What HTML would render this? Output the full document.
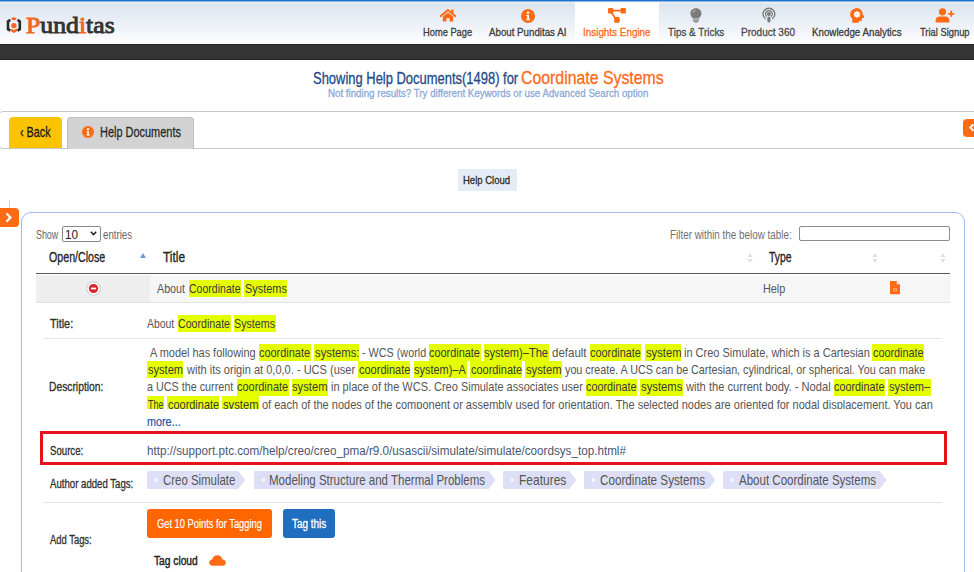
<!DOCTYPE html>
<html><head><meta charset="utf-8"><title>Punditas</title>
<style>
html,body{margin:0;padding:0;width:974px;height:572px;overflow:hidden;background:#fff;}
body{position:relative;font-family:'Liberation Sans',sans-serif;}
div,span{box-sizing:border-box;}
svg{position:absolute;overflow:visible;}
</style></head><body>
<div style="position:absolute;left:0px;top:0px;width:974px;height:44px;background:linear-gradient(to bottom,#1b72d0 0,#1b72d0 1px,#8fb4e0 1px,#8fb4e0 2px,#eceff3 2px,#e9edf2 3px,#dce5ef 4px,#f4f7fb 34px,#fdfeff 43px)"></div>
<div style="position:absolute;left:0px;top:44px;width:974px;height:16px;background:#343434;border-top:1px solid #222;border-bottom:1px solid #252525"></div>
<div style="position:absolute;left:575px;top:2px;width:84px;height:42px;background:#fff"></div>
<svg style="left:6px;top:17px" width="16" height="16" viewBox="0 0 16 16">
<path d="M4.3 2.9 L2 4.4 L2 12.2 L4.3 13.7" fill="none" stroke="#2b2b2b" stroke-width="2.6"/>
<path d="M11.5 2.9 L13.8 4.4 L13.8 12.2 L11.5 13.7" fill="none" stroke="#2b2b2b" stroke-width="2.6"/>
<path d="M7.9 0.3 L10.4 1.1 L10.4 2.5 L7.9 3.3 L5.4 2.5 L5.4 1.1Z" fill="#f26522"/>
<circle cx="7.9" cy="8.6" r="2.7" fill="#f26522"/>
<path d="M4.8 11.4 L7.9 13.1 L10.9 11.4 L10.9 14.3 L7.9 16 L4.8 14.3Z" fill="#f26522"/>
</svg>
<div style="position:absolute;left:26.10px;top:13px;font:normal 24px/24px 'Liberation Serif', serif;color:#333;white-space:pre;transform-origin:0 20px;transform:scale(1.0725,1.0000);-webkit-text-stroke:0.9px currentColor;"><span style="color:#f26522">P</span>und<span style="color:#f26522">i</span>tas</div>
<div style="position:absolute;left:423.27px;top:27px;font:normal 11.5px/11.5px 'Liberation Sans', sans-serif;color:#3a3a3a;white-space:pre;transform-origin:0 9px;transform:scale(0.8086,1.0000);-webkit-text-stroke:0.3px currentColor;">Home Page</div>
<div style="position:absolute;left:489.00px;top:27px;font:normal 11.5px/11.5px 'Liberation Sans', sans-serif;color:#3a3a3a;white-space:pre;transform-origin:0 9px;transform:scale(0.8459,1.0000);-webkit-text-stroke:0.3px currentColor;">About Punditas AI</div>
<div style="position:absolute;left:582.83px;top:27px;font:normal 11.5px/11.5px 'Liberation Sans', sans-serif;color:#ff6a1f;white-space:pre;transform-origin:0 9px;transform:scale(0.8593,1.0000);-webkit-text-stroke:0.3px currentColor;">Insights Engine</div>
<div style="position:absolute;left:667.85px;top:27px;font:normal 11.5px/11.5px 'Liberation Sans', sans-serif;color:#4a4a4a;white-space:pre;transform-origin:0 9px;transform:scale(0.8608,1.0000);-webkit-text-stroke:0.3px currentColor;">Tips &amp; Tricks</div>
<div style="position:absolute;left:741.22px;top:27px;font:normal 11.5px/11.5px 'Liberation Sans', sans-serif;color:#4a4a4a;white-space:pre;transform-origin:0 9px;transform:scale(0.8713,1.0000);-webkit-text-stroke:0.3px currentColor;">Product 360</div>
<div style="position:absolute;left:812.24px;top:27px;font:normal 11.5px/11.5px 'Liberation Sans', sans-serif;color:#3a3a3a;white-space:pre;transform-origin:0 9px;transform:scale(0.8488,1.0000);-webkit-text-stroke:0.3px currentColor;">Knowledge Analytics</div>
<div style="position:absolute;left:919.85px;top:27px;font:normal 11.5px/11.5px 'Liberation Sans', sans-serif;color:#3a3a3a;white-space:pre;transform-origin:0 9px;transform:scale(0.8127,1.0000);-webkit-text-stroke:0.3px currentColor;">Trial Signup</div>
<svg style="left:440px;top:9px" width="16" height="13" viewBox="0 0 16 13">
<path d="M0.8 7 L8 1 L15.2 7" fill="none" stroke="#ff6a13" stroke-width="2" stroke-linecap="round" stroke-linejoin="round"/>
<rect x="11.3" y="0.6" width="2.2" height="4" fill="#ff6a13"/>
<path d="M2.8 7.6 L8 3.4 L13.2 7.6 L13.2 12.6 L9.6 12.6 L9.6 9.3 L6.4 9.3 L6.4 12.6 L2.8 12.6Z" fill="#ff6a13"/>
</svg>
<svg style="left:521px;top:8.5px" width="14" height="14" viewBox="0 0 14 14">
<circle cx="7" cy="7" r="7" fill="#ff6a13"/>
<circle cx="7" cy="3.7" r="1.3" fill="#fff"/>
<path d="M5.4 5.9 L8 5.9 L8 9.9 L9 9.9 L9 11.2 L5.2 11.2 L5.2 9.9 L6.2 9.9 L6.2 7.1 L5.4 7.1Z" fill="#fff"/>
</svg>
<svg style="left:608px;top:8px" width="18" height="15" viewBox="0 0 18 15">
<rect x="0" y="0.1" width="5.2" height="5.5" rx="1" fill="#ff6a13"/>
<rect x="12.5" y="0.1" width="5.4" height="5.5" rx="1" fill="#ff6a13"/>
<rect x="6.2" y="9.1" width="5.5" height="5.6" rx="1" fill="#ff6a13"/>
<path d="M4 2.6 L13 2.6 M3.4 4 L6.9 10" stroke="#ff6a13" stroke-width="1.7"/>
</svg>
<svg style="left:690px;top:7.8px" width="12" height="15" viewBox="0 0 12 15">
<path d="M5.9 0.2 C2.6 0.2 0.4 2.6 0.4 5.5 C0.4 7.8 1.9 8.9 2.6 10.5 L9.2 10.5 C9.9 8.9 11.4 7.8 11.4 5.5 C11.4 2.6 9.2 0.2 5.9 0.2Z" fill="#7b7b7b"/>
<rect x="2.8" y="11.4" width="6.2" height="1.3" fill="#7b7b7b"/>
<path d="M3.2 13.3 L8.6 13.3 L7.5 14.6 L4.3 14.6Z" fill="#7b7b7b"/>
<path d="M2.9 5.2 C2.9 3.5 4.2 2.4 5.7 2.4" stroke="#a5a5a5" stroke-width="1.1" fill="none"/>
</svg>
<svg style="left:761.5px;top:8px" width="14" height="15" viewBox="0 0 14 15">
<path d="M3.52 10.93 A5.9 5.9 0 1 1 10.28 10.93" fill="none" stroke="#7b7b7b" stroke-width="1.4"/>
<path d="M4.71 8.7 A3.4 3.4 0 1 1 9.09 8.7" fill="none" stroke="#7b7b7b" stroke-width="1.3"/>
<circle cx="6.9" cy="6.1" r="2" fill="#7b7b7b"/>
<rect x="5.35" y="8.6" width="3.1" height="6" rx="1.5" fill="#7b7b7b"/>
</svg>
<svg style="left:850px;top:7.8px" width="15" height="15" viewBox="0 0 15 15">
<path d="M7.2 0.3 C3.2 0.3 0.2 3 0.2 6.6 C0.2 8.6 1.2 9.9 2.3 10.9 L2.3 14.8 L8.8 14.8 L8.8 12.9 L10.5 12.9 C11.4 12.9 11.9 12.2 11.9 11.4 L11.9 9.9 L13.5 9.9 C14.2 9.9 14.4 9.3 14.1 8.8 L12.7 6.3 C12.5 2.9 10.4 0.3 7.2 0.3Z" fill="#ff6a13"/>
<polygon points="7.00,2.70 7.99,4.00 9.62,3.78 9.40,5.41 10.70,6.40 9.40,7.39 9.62,9.02 7.99,8.80 7.00,10.10 6.01,8.80 4.38,9.02 4.60,7.39 3.30,6.40 4.60,5.41 4.38,3.78 6.01,4.00" fill="#fff"/>
<circle cx="7.0" cy="6.4" r="0.8" fill="#ffc9a8"/>
</svg>
<svg style="left:935px;top:8px" width="20" height="15" viewBox="0 0 20 15">
<circle cx="7.5" cy="3.8" r="3.6" fill="#ff6a13"/>
<path d="M0.6 14.6 L0.6 12.6 C0.6 10 2.4 8.6 4.6 8.6 L10.4 8.6 C12.6 8.6 14.4 10 14.4 12.6 L14.4 14.6Z" fill="#ff6a13"/>
<path d="M16.2 2.8 L16.2 8.8 M13.2 5.8 L19.2 5.8" stroke="#ff6a13" stroke-width="1.8"/>
</svg>
<div style="position:absolute;left:312.90px;top:71px;font:normal 16px/16px 'Liberation Sans', sans-serif;color:#1f4a88;white-space:pre;transform-origin:0 13px;transform:scale(0.8095,1.0000);-webkit-text-stroke:0.3px currentColor;">Showing Help Documents(1498) for</div>
<div style="position:absolute;left:521.26px;top:68px;font:normal 19px/19px 'Liberation Sans', sans-serif;color:#ff6a1a;white-space:pre;transform-origin:0 16px;transform:scale(0.8338,1.0000);-webkit-text-stroke:0.3px currentColor;">Coordinate Systems</div>
<div style="position:absolute;left:328.24px;top:88px;font:normal 11.5px/11.5px 'Liberation Sans', sans-serif;color:#8aa8d8;white-space:pre;transform-origin:0 9px;transform:scale(0.8457,1.0000);-webkit-text-stroke:0.3px currentColor;">Not finding results? Try different Keywords or use Advanced Search option</div>
<div style="position:absolute;left:-2px;top:111px;width:990px;height:38px;border:1px solid #c9c9c9;border-top-width:1.5px;border-radius:5px"></div>
<div style="position:absolute;left:9px;top:117px;width:53px;height:31px;background:#fcc400;border-radius:4px 4px 0 0"></div>
<div style="position:absolute;left:20.16px;top:125px;font:normal 14.5px/14.5px 'Liberation Sans', sans-serif;color:#1a1a1a;white-space:pre;transform-origin:0 12px;transform:scale(0.7463,1.0000);-webkit-text-stroke:0.3px currentColor;">‹ Back</div>
<div style="position:absolute;left:67px;top:117px;width:127px;height:31.5px;background:#d3d3d3;border:1px solid #bcbcbc;border-bottom:none;border-radius:4px 4px 0 0"></div>
<svg style="left:81.8px;top:126.3px" width="12" height="12" viewBox="0 0 14 14">
<circle cx="7" cy="7" r="7" fill="#ff6a13"/>
<circle cx="7" cy="3.7" r="1.3" fill="#fff"/>
<path d="M5.4 5.9 L8 5.9 L8 9.9 L9 9.9 L9 11.2 L5.2 11.2 L5.2 9.9 L6.2 9.9 L6.2 7.1 L5.4 7.1Z" fill="#fff"/>
</svg>
<div style="position:absolute;left:99.75px;top:125px;font:normal 14.5px/14.5px 'Liberation Sans', sans-serif;color:#2a2a2a;white-space:pre;transform-origin:0 12px;transform:scale(0.7547,1.0000);-webkit-text-stroke:0.3px currentColor;">Help Documents</div>
<div style="position:absolute;left:962.6px;top:118.8px;width:16px;height:17.8px;background:#ff6a13;border-radius:4px"></div>
<svg style="left:966px;top:122px" width="8" height="11" viewBox="0 0 8 11">
<path d="M7.3 2.4 L4.3 5.6 L7.3 8.8" fill="none" stroke="#fff" stroke-width="2"/>
</svg>
<div style="position:absolute;left:457.7px;top:168.9px;width:59.6px;height:21.8px;background:#e6ecf5"></div>
<div style="position:absolute;left:463.46px;top:175px;font:normal 11.5px/11.5px 'Liberation Sans', sans-serif;color:#2a2a2a;white-space:pre;transform-origin:0 9px;transform:scale(0.8275,1.0000);-webkit-text-stroke:0.3px currentColor;">Help Cloud</div>
<div style="position:absolute;left:9px;top:200px;width:1px;height:8px;background:#cfcfcf"></div>
<div style="position:absolute;left:-5px;top:207.6px;width:24px;height:19px;background:#ff6a13;border-radius:4px"></div>
<svg style="left:5px;top:212px" width="8" height="11" viewBox="0 0 8 11">
<path d="M1.5 1.3 L5.4 5.5 L1.5 9.7" fill="none" stroke="#fff" stroke-width="2.2"/>
</svg>
<div style="position:absolute;left:20.8px;top:211.5px;width:944.4px;height:420px;border:1.4px solid #a0bcf3;border-radius:10px"></div>
<div style="position:absolute;left:35.72px;top:229px;font:normal 12px/12px 'Liberation Sans', sans-serif;color:#666;white-space:pre;transform-origin:0 10px;transform:scale(0.7385,1.0000);">Show</div>
<div style="position:absolute;left:61.5px;top:226.3px;width:39px;height:15.3px;border:1px solid #888;border-radius:2px;background:#fff"></div>
<div style="position:absolute;left:65.27px;top:229px;font:normal 12px/12px 'Liberation Sans', sans-serif;color:#222;white-space:pre;transform-origin:0 10px;transform:scale(0.9757,1.0000);">10</div>
<svg style="left:90px;top:230.5px" width="7" height="5" viewBox="0 0 7 5">
<path d="M0.8 0.8 L3.5 3.6 L6.2 0.8" fill="none" stroke="#222" stroke-width="1.5"/>
</svg>
<div style="position:absolute;left:102.70px;top:229px;font:normal 12px/12px 'Liberation Sans', sans-serif;color:#666;white-space:pre;transform-origin:0 10px;transform:scale(0.8081,1.0000);">entries</div>
<div style="position:absolute;left:669.83px;top:229px;font:normal 12px/12px 'Liberation Sans', sans-serif;color:#707070;white-space:pre;transform-origin:0 10px;transform:scale(0.8216,1.0000);">Filter within the below table:</div>
<div style="position:absolute;left:799px;top:226.3px;width:150.5px;height:15.2px;border:1px solid #8c8c8c;border-radius:2px;background:#fff"></div>
<div style="position:absolute;left:48.80px;top:250px;font:normal 14px/14px 'Liberation Sans', sans-serif;color:#222;white-space:pre;transform-origin:0 12px;transform:scale(0.7606,1.0000);-webkit-text-stroke:0.3px currentColor;">Open/Close</div>
<div style="position:absolute;left:162.71px;top:250px;font:normal 14px/14px 'Liberation Sans', sans-serif;color:#222;white-space:pre;transform-origin:0 12px;transform:scale(0.8511,1.0000);-webkit-text-stroke:0.3px currentColor;">Title</div>
<div style="position:absolute;left:769.44px;top:250px;font:normal 14px/14px 'Liberation Sans', sans-serif;color:#222;white-space:pre;transform-origin:0 12px;transform:scale(0.7407,1.0000);-webkit-text-stroke:0.3px currentColor;">Type</div>
<svg style="left:140px;top:253px" width="6" height="5" viewBox="0 0 6 5"><path d="M3 0 L6 5 L0 5Z" fill="#6c9ad8"/></svg>
<svg style="left:747px;top:253px" width="6" height="10" viewBox="0 0 6 10"><path d="M3 0 L5.6 4 L0.4 4Z M3 10 L5.6 6 L0.4 6Z" fill="#e0e0e0"/></svg>
<svg style="left:872.4px;top:253px" width="6" height="10" viewBox="0 0 6 10"><path d="M3 0 L5.6 4 L0.4 4Z M3 10 L5.6 6 L0.4 6Z" fill="#e0e0e0"/></svg>
<svg style="left:939.6px;top:253px" width="6" height="10" viewBox="0 0 6 10"><path d="M3 0 L5.6 4 L0.4 4Z M3 10 L5.6 6 L0.4 6Z" fill="#e0e0e0"/></svg>
<div style="position:absolute;left:35.5px;top:272.9px;width:914.3px;height:1.6px;background:#585858"></div>
<div style="position:absolute;left:35.5px;top:274.5px;width:914.3px;height:28.5px;background:#f6f6f6;border-bottom:1px solid #e2e2e2"></div>
<div style="position:absolute;left:35.5px;top:274.5px;width:114px;height:27.5px;background:#eeeeee"></div>
<svg style="left:85.7px;top:280.7px" width="15" height="15" viewBox="0 0 15 15">
<circle cx="7.5" cy="7.5" r="6.8" fill="#fff" stroke="#c8c8c8" stroke-width="1"/>
<circle cx="7.5" cy="7.5" r="4.6" fill="#d8232a"/>
<rect x="4.9" y="6.6" width="5.2" height="1.8" fill="#fff"/>
</svg>
<div style="position:absolute;left:157.40px;top:282px;font:normal 13.5px/13.5px 'Liberation Sans', sans-serif;color:#555555;white-space:pre;transform-origin:0 11px;transform:scale(0.7926,1.0000);">About</div>
<div style="position:absolute;left:188.6px;top:280.3px;width:52.400000000000006px;height:16.9px;background:#e4ff00"></div>
<div style="position:absolute;left:189.01px;top:282px;font:normal 13.5px/13.5px 'Liberation Sans', sans-serif;color:#3a3a3a;white-space:pre;transform-origin:0 11px;transform:scale(0.7801,1.0000);">Coordinate</div>
<div style="position:absolute;left:244px;top:280.3px;width:43px;height:16.9px;background:#e4ff00"></div>
<div style="position:absolute;left:244.56px;top:282px;font:normal 13.5px/13.5px 'Liberation Sans', sans-serif;color:#3a3a3a;white-space:pre;transform-origin:0 11px;transform:scale(0.8092,1.0000);">Systems</div>
<div style="position:absolute;left:763.15px;top:282px;font:normal 13.5px/13.5px 'Liberation Sans', sans-serif;color:#555555;white-space:pre;transform-origin:0 11px;transform:scale(0.8027,1.0000);">Help</div>
<svg style="left:889.6px;top:281px" width="10" height="13.3" viewBox="0 0 10 13.3">
<path d="M0.8 0 L6.6 0 L10 3.4 L10 12.5 Q10 13.3 9.2 13.3 L0.8 13.3 Q0 13.3 0 12.5 L0 0.8 Q0 0 0.8 0Z" fill="#ff6a13"/>
<path d="M6.7 0 L6.7 3.3 L10 3.3Z" fill="#fde3d3"/>
<rect x="3" y="7.3" width="4" height="3.2" fill="#ffb48a"/>
<rect x="3.6" y="7.9" width="1.1" height="0.9" fill="#ff6a13"/><rect x="5.3" y="7.9" width="1.1" height="0.9" fill="#ff6a13"/>
<rect x="3.6" y="9.2" width="1.1" height="0.8" fill="#ff6a13"/><rect x="5.3" y="9.2" width="1.1" height="0.8" fill="#ff6a13"/>
</svg>
<div style="position:absolute;left:49.83px;top:318px;font:normal 12.5px/12.5px 'Liberation Sans', sans-serif;color:#2e2e2e;white-space:pre;transform-origin:0 10px;transform:scale(0.8696,1.0000);-webkit-text-stroke:0.3px currentColor;">Title:</div>
<div style="position:absolute;left:147.30px;top:317px;font:normal 13px/13px 'Liberation Sans', sans-serif;color:#555555;white-space:pre;transform-origin:0 11px;transform:scale(0.8025,1.0000);">About</div>
<div style="position:absolute;left:177.8px;top:315.3px;width:52.89999999999998px;height:16.9px;background:#e4ff00"></div>
<div style="position:absolute;left:178.20px;top:317px;font:normal 13px/13px 'Liberation Sans', sans-serif;color:#3a3a3a;white-space:pre;transform-origin:0 11px;transform:scale(0.8181,1.0000);">Coordinate</div>
<div style="position:absolute;left:233.8px;top:315.3px;width:42.19999999999999px;height:16.9px;background:#e4ff00"></div>
<div style="position:absolute;left:234.37px;top:317px;font:normal 13px/13px 'Liberation Sans', sans-serif;color:#3a3a3a;white-space:pre;transform-origin:0 11px;transform:scale(0.8240,1.0000);">Systems</div>
<div style="position:absolute;left:42.8px;top:337.8px;width:899.2px;height:1px;background:#e3e3e3"></div>
<div style="position:absolute;left:49.20px;top:381px;font:normal 12.5px/12.5px 'Liberation Sans', sans-serif;color:#2e2e2e;white-space:pre;transform-origin:0 10px;transform:scale(0.8233,1.0000);-webkit-text-stroke:0.3px currentColor;">Description:</div>
<div style="position:absolute;left:0;top:340px;width:974px;height:69px;overflow:hidden">
<div style="position:absolute;left:0;top:-340px;width:974px;height:572px">
<div style="position:absolute;left:150.00px;top:346px;font:normal 13px/13px 'Liberation Sans', sans-serif;color:#555555;white-space:pre;transform-origin:0 11px;transform:scale(0.8399,1.0000);">A model has following</div>
<div style="position:absolute;left:258.8px;top:344.2px;width:52.0px;height:16.9px;background:#e4ff00"></div>
<div style="position:absolute;left:259.36px;top:346px;font:normal 13px/13px 'Liberation Sans', sans-serif;color:#3a3a3a;white-space:pre;transform-origin:0 11px;transform:scale(0.8398,1.0000);">coordinate</div>
<div style="position:absolute;left:314px;top:344.2px;width:45px;height:16.9px;background:#e4ff00"></div>
<div style="position:absolute;left:314.72px;top:346px;font:normal 13px/13px 'Liberation Sans', sans-serif;color:#3a3a3a;white-space:pre;transform-origin:0 11px;transform:scale(0.8656,1.0000);">systems:</div>
<div style="position:absolute;left:362.06px;top:346px;font:normal 13px/13px 'Liberation Sans', sans-serif;color:#555555;white-space:pre;transform-origin:0 11px;transform:scale(0.8300,1.0000);">- WCS (world</div>
<div style="position:absolute;left:428.8px;top:344.2px;width:51.89999999999998px;height:16.9px;background:#e4ff00"></div>
<div style="position:absolute;left:429.36px;top:346px;font:normal 13px/13px 'Liberation Sans', sans-serif;color:#3a3a3a;white-space:pre;transform-origin:0 11px;transform:scale(0.8381,1.0000);">coordinate</div>
<div style="position:absolute;left:483.7px;top:344.2px;width:65.19999999999999px;height:16.9px;background:#e4ff00"></div>
<div style="position:absolute;left:484.43px;top:346px;font:normal 13px/13px 'Liberation Sans', sans-serif;color:#3a3a3a;white-space:pre;transform-origin:0 11px;transform:scale(0.8521,1.0000);">system)–The</div>
<div style="position:absolute;left:551.84px;top:346px;font:normal 13px/13px 'Liberation Sans', sans-serif;color:#555555;white-space:pre;transform-origin:0 11px;transform:scale(0.8844,1.0000);">default</div>
<div style="position:absolute;left:589.6px;top:344.2px;width:51.89999999999998px;height:16.9px;background:#e4ff00"></div>
<div style="position:absolute;left:590.16px;top:346px;font:normal 13px/13px 'Liberation Sans', sans-serif;color:#3a3a3a;white-space:pre;transform-origin:0 11px;transform:scale(0.8381,1.0000);">coordinate</div>
<div style="position:absolute;left:644.8px;top:344.2px;width:36.60000000000002px;height:16.9px;background:#e4ff00"></div>
<div style="position:absolute;left:645.52px;top:346px;font:normal 13px/13px 'Liberation Sans', sans-serif;color:#3a3a3a;white-space:pre;transform-origin:0 11px;transform:scale(0.8636,1.0000);">system</div>
<div style="position:absolute;left:683.91px;top:346px;font:normal 13px/13px 'Liberation Sans', sans-serif;color:#555555;white-space:pre;transform-origin:0 11px;transform:scale(0.8459,1.0000);">in Creo Simulate, which is a Cartesian</div>
<div style="position:absolute;left:872.3px;top:344.2px;width:51.60000000000002px;height:16.9px;background:#e4ff00"></div>
<div style="position:absolute;left:872.86px;top:346px;font:normal 13px/13px 'Liberation Sans', sans-serif;color:#3a3a3a;white-space:pre;transform-origin:0 11px;transform:scale(0.8331,1.0000);">coordinate</div>
<div style="position:absolute;left:147.2px;top:361.40000000000003px;width:36.10000000000002px;height:16.9px;background:#e4ff00"></div>
<div style="position:absolute;left:147.93px;top:363px;font:normal 13px/13px 'Liberation Sans', sans-serif;color:#3a3a3a;white-space:pre;transform-origin:0 11px;transform:scale(0.8512,1.0000);">system</div>
<div style="position:absolute;left:186.67px;top:363px;font:normal 13px/13px 'Liberation Sans', sans-serif;color:#555555;white-space:pre;transform-origin:0 11px;transform:scale(0.8496,1.0000);">with its origin at 0,0,0. - UCS (user</div>
<div style="position:absolute;left:358px;top:361.40000000000003px;width:52.39999999999998px;height:16.9px;background:#e4ff00"></div>
<div style="position:absolute;left:358.56px;top:363px;font:normal 13px/13px 'Liberation Sans', sans-serif;color:#3a3a3a;white-space:pre;transform-origin:0 11px;transform:scale(0.8465,1.0000);">coordinate</div>
<div style="position:absolute;left:413.6px;top:361.40000000000003px;width:53.39999999999998px;height:16.9px;background:#e4ff00"></div>
<div style="position:absolute;left:414.33px;top:363px;font:normal 13px/13px 'Liberation Sans', sans-serif;color:#3a3a3a;white-space:pre;transform-origin:0 11px;transform:scale(0.8423,1.0000);">system)–A</div>
<div style="position:absolute;left:470.4px;top:361.40000000000003px;width:52.10000000000002px;height:16.9px;background:#e4ff00"></div>
<div style="position:absolute;left:470.96px;top:363px;font:normal 13px/13px 'Liberation Sans', sans-serif;color:#3a3a3a;white-space:pre;transform-origin:0 11px;transform:scale(0.8415,1.0000);">coordinate</div>
<div style="position:absolute;left:525.3px;top:361.40000000000003px;width:36.60000000000002px;height:16.9px;background:#e4ff00"></div>
<div style="position:absolute;left:526.02px;top:363px;font:normal 13px/13px 'Liberation Sans', sans-serif;color:#3a3a3a;white-space:pre;transform-origin:0 11px;transform:scale(0.8636,1.0000);">system</div>
<div style="position:absolute;left:565.10px;top:363px;font:normal 13px/13px 'Liberation Sans', sans-serif;color:#555555;white-space:pre;transform-origin:0 11px;transform:scale(0.8270,1.0000);">you create. A UCS can be Cartesian, cylindrical, or spherical. You can make</div>
<div style="position:absolute;left:147.16px;top:380px;font:normal 13px/13px 'Liberation Sans', sans-serif;color:#555555;white-space:pre;transform-origin:0 11px;transform:scale(0.8285,1.0000);">a UCS the current</div>
<div style="position:absolute;left:236.6px;top:378.90000000000003px;width:52.099999999999994px;height:16.9px;background:#e4ff00"></div>
<div style="position:absolute;left:237.16px;top:380px;font:normal 13px/13px 'Liberation Sans', sans-serif;color:#3a3a3a;white-space:pre;transform-origin:0 11px;transform:scale(0.8415,1.0000);">coordinate</div>
<div style="position:absolute;left:291.6px;top:378.90000000000003px;width:36.599999999999966px;height:16.9px;background:#e4ff00"></div>
<div style="position:absolute;left:292.32px;top:380px;font:normal 13px/13px 'Liberation Sans', sans-serif;color:#3a3a3a;white-space:pre;transform-origin:0 11px;transform:scale(0.8636,1.0000);">system</div>
<div style="position:absolute;left:330.71px;top:380px;font:normal 13px/13px 'Liberation Sans', sans-serif;color:#555555;white-space:pre;transform-origin:0 11px;transform:scale(0.8439,1.0000);">in place of the WCS. Creo Simulate associates user</div>
<div style="position:absolute;left:585.7px;top:378.90000000000003px;width:51.59999999999991px;height:16.9px;background:#e4ff00"></div>
<div style="position:absolute;left:586.26px;top:380px;font:normal 13px/13px 'Liberation Sans', sans-serif;color:#3a3a3a;white-space:pre;transform-origin:0 11px;transform:scale(0.8331,1.0000);">coordinate</div>
<div style="position:absolute;left:640.3px;top:378.90000000000003px;width:42.700000000000045px;height:16.9px;background:#e4ff00"></div>
<div style="position:absolute;left:641.02px;top:380px;font:normal 13px/13px 'Liberation Sans', sans-serif;color:#3a3a3a;white-space:pre;transform-origin:0 11px;transform:scale(0.8691,1.0000);">systems</div>
<div style="position:absolute;left:686.37px;top:380px;font:normal 13px/13px 'Liberation Sans', sans-serif;color:#555555;white-space:pre;transform-origin:0 11px;transform:scale(0.8568,1.0000);">with the current body. - Nodal</div>
<div style="position:absolute;left:833.5px;top:378.90000000000003px;width:51.5px;height:16.9px;background:#e4ff00"></div>
<div style="position:absolute;left:834.06px;top:380px;font:normal 13px/13px 'Liberation Sans', sans-serif;color:#3a3a3a;white-space:pre;transform-origin:0 11px;transform:scale(0.8314,1.0000);">coordinate</div>
<div style="position:absolute;left:888.3px;top:378.90000000000003px;width:42.90000000000009px;height:16.9px;background:#e4ff00"></div>
<div style="position:absolute;left:889.03px;top:380px;font:normal 13px/13px 'Liberation Sans', sans-serif;color:#3a3a3a;white-space:pre;transform-origin:0 11px;transform:scale(0.8513,1.0000);">system–</div>
<div style="position:absolute;left:147.2px;top:396.40000000000003px;width:16.80000000000001px;height:16.9px;background:#e4ff00"></div>
<div style="position:absolute;left:147.96px;top:398px;font:normal 13px/13px 'Liberation Sans', sans-serif;color:#3a3a3a;white-space:pre;transform-origin:0 11px;transform:scale(0.6922,1.0000);">The</div>
<div style="position:absolute;left:167.2px;top:396.40000000000003px;width:52.10000000000002px;height:16.9px;background:#e4ff00"></div>
<div style="position:absolute;left:167.76px;top:398px;font:normal 13px/13px 'Liberation Sans', sans-serif;color:#3a3a3a;white-space:pre;transform-origin:0 11px;transform:scale(0.8415,1.0000);">coordinate</div>
<div style="position:absolute;left:222.2px;top:396.40000000000003px;width:36.60000000000002px;height:16.9px;background:#e4ff00"></div>
<div style="position:absolute;left:222.92px;top:398px;font:normal 13px/13px 'Liberation Sans', sans-serif;color:#3a3a3a;white-space:pre;transform-origin:0 11px;transform:scale(0.8636,1.0000);">system</div>
<div style="position:absolute;left:261.66px;top:398px;font:normal 13px/13px 'Liberation Sans', sans-serif;color:#555555;white-space:pre;transform-origin:0 11px;transform:scale(0.8471,1.0000);">of each of the nodes of the component or assembly used for orientation. The selected nodes are oriented for nodal displacement. You can</div>
</div></div>
<div style="position:absolute;left:146.72px;top:415px;font:normal 13px/13px 'Liberation Sans', sans-serif;color:#2355a8;white-space:pre;transform-origin:0 11px;transform:scale(0.8319,1.0000);-webkit-text-stroke:0.2px currentColor;">more...</div>
<div style="position:absolute;left:40.3px;top:431.3px;width:906.3px;height:34.2px;border:3.9px solid #e3121c"></div>
<div style="position:absolute;left:49.70px;top:445px;font:normal 12.5px/12.5px 'Liberation Sans', sans-serif;color:#2e2e2e;white-space:pre;transform-origin:0 10px;transform:scale(0.7700,1.0000);-webkit-text-stroke:0.3px currentColor;">Source:</div>
<div style="position:absolute;left:146.57px;top:445px;font:normal 12.5px/12.5px 'Liberation Sans', sans-serif;color:#4a5570;white-space:pre;transform-origin:0 10px;transform:scale(0.9341,1.0000);">http://support.ptc.com/help/creo/creo_pma/r9.0/usascii/simulate/simulate/coordsys_top.html#</div>
<div style="position:absolute;left:50.00px;top:478px;font:normal 12.5px/12.5px 'Liberation Sans', sans-serif;color:#2e2e2e;white-space:pre;transform-origin:0 10px;transform:scale(0.7699,1.0000);-webkit-text-stroke:0.3px currentColor;">Author added Tags:</div>
<svg style="left:147.3px;top:471.4px" width="99.19999999999999" height="18" viewBox="0 0 99.19999999999999 18">
<path d="M0 1 Q0 0 1 0 L91.19999999999999 0 L98.19999999999999 9 L91.19999999999999 18 L1 18 Q0 18 0 17Z" fill="#dcdff5"/>
<circle cx="9.3" cy="9" r="1.9" fill="#f4f5fc"/></svg>
<div style="position:absolute;left:163.06px;top:472px;font:normal 15px/15px 'Liberation Sans', sans-serif;color:#555;white-space:pre;transform-origin:0 13px;transform:scale(0.7618,1.0000);">Creo Simulate</div>
<svg style="left:253.9px;top:471.4px" width="242.6" height="18" viewBox="0 0 242.6 18">
<path d="M0 1 Q0 0 1 0 L234.6 0 L241.6 9 L234.6 18 L1 18 Q0 18 0 17Z" fill="#dcdff5"/>
<circle cx="9.3" cy="9" r="1.9" fill="#f4f5fc"/></svg>
<div style="position:absolute;left:269.10px;top:472px;font:normal 15px/15px 'Liberation Sans', sans-serif;color:#555;white-space:pre;transform-origin:0 13px;transform:scale(0.7674,1.0000);">Modeling Structure and Thermal Problems</div>
<svg style="left:503.3px;top:471.4px" width="74.19999999999999" height="18" viewBox="0 0 74.19999999999999 18">
<path d="M0 1 Q0 0 1 0 L66.19999999999999 0 L73.19999999999999 9 L66.19999999999999 18 L1 18 Q0 18 0 17Z" fill="#dcdff5"/>
<circle cx="9.3" cy="9" r="1.9" fill="#f4f5fc"/></svg>
<div style="position:absolute;left:519.06px;top:472px;font:normal 15px/15px 'Liberation Sans', sans-serif;color:#555;white-space:pre;transform-origin:0 13px;transform:scale(0.7993,1.0000);">Features</div>
<svg style="left:584.2px;top:471.4px" width="132.29999999999995" height="18" viewBox="0 0 132.29999999999995 18">
<path d="M0 1 Q0 0 1 0 L124.29999999999995 0 L131.29999999999995 9 L124.29999999999995 18 L1 18 Q0 18 0 17Z" fill="#dcdff5"/>
<circle cx="9.3" cy="9" r="1.9" fill="#f4f5fc"/></svg>
<div style="position:absolute;left:600.25px;top:472px;font:normal 15px/15px 'Liberation Sans', sans-serif;color:#555;white-space:pre;transform-origin:0 13px;transform:scale(0.7783,1.0000);">Coordinate Systems</div>
<svg style="left:723px;top:471.4px" width="164.5" height="18" viewBox="0 0 164.5 18">
<path d="M0 1 Q0 0 1 0 L156.5 0 L163.5 9 L156.5 18 L1 18 Q0 18 0 17Z" fill="#dcdff5"/>
<circle cx="9.3" cy="9" r="1.9" fill="#f4f5fc"/></svg>
<div style="position:absolute;left:739.30px;top:472px;font:normal 15px/15px 'Liberation Sans', sans-serif;color:#555;white-space:pre;transform-origin:0 13px;transform:scale(0.7682,1.0000);">About Coordinate Systems</div>
<div style="position:absolute;left:42.8px;top:502.4px;width:899.2px;height:1px;background:#e3e3e3"></div>
<div style="position:absolute;left:147.3px;top:509px;width:124.7px;height:29px;background:#ff6600;border-radius:3px"></div>
<div style="position:absolute;left:157.06px;top:518px;font:normal 12px/12px 'Liberation Sans', sans-serif;color:#fff;white-space:pre;transform-origin:0 10px;transform:scale(0.7758,1.0000);-webkit-text-stroke:0.2px currentColor;">Get 10 Points for Tagging</div>
<div style="position:absolute;left:283px;top:509px;width:51.5px;height:29px;background:#1f6ebf;border-radius:3px"></div>
<div style="position:absolute;left:291.85px;top:518px;font:normal 12px/12px 'Liberation Sans', sans-serif;color:#fff;white-space:pre;transform-origin:0 10px;transform:scale(0.8261,1.0000);-webkit-text-stroke:0.3px currentColor;">Tag this</div>
<div style="position:absolute;left:50.40px;top:534px;font:normal 12.5px/12.5px 'Liberation Sans', sans-serif;color:#2e2e2e;white-space:pre;transform-origin:0 10px;transform:scale(0.7528,1.0000);-webkit-text-stroke:0.3px currentColor;">Add Tags:</div>
<div style="position:absolute;left:153.84px;top:554px;font:normal 13px/13px 'Liberation Sans', sans-serif;color:#222;white-space:pre;transform-origin:0 11px;transform:scale(0.7859,1.0000);-webkit-text-stroke:0.45px currentColor;">Tag cloud</div>
<svg style="left:209px;top:555px" width="17" height="11" viewBox="0 0 17 11">
<path d="M3.6 10.8 C1.5 10.8 0.2 9.4 0.2 7.6 C0.2 5.9 1.5 4.6 3.1 4.5 C3.6 2 5.7 0.2 8.3 0.2 C10.9 0.2 12.9 2 13.4 4.4 C15.3 4.6 16.8 6 16.8 7.7 C16.8 9.5 15.4 10.8 13.4 10.8Z" fill="#ff6a13"/>
</svg>
</body></html>
